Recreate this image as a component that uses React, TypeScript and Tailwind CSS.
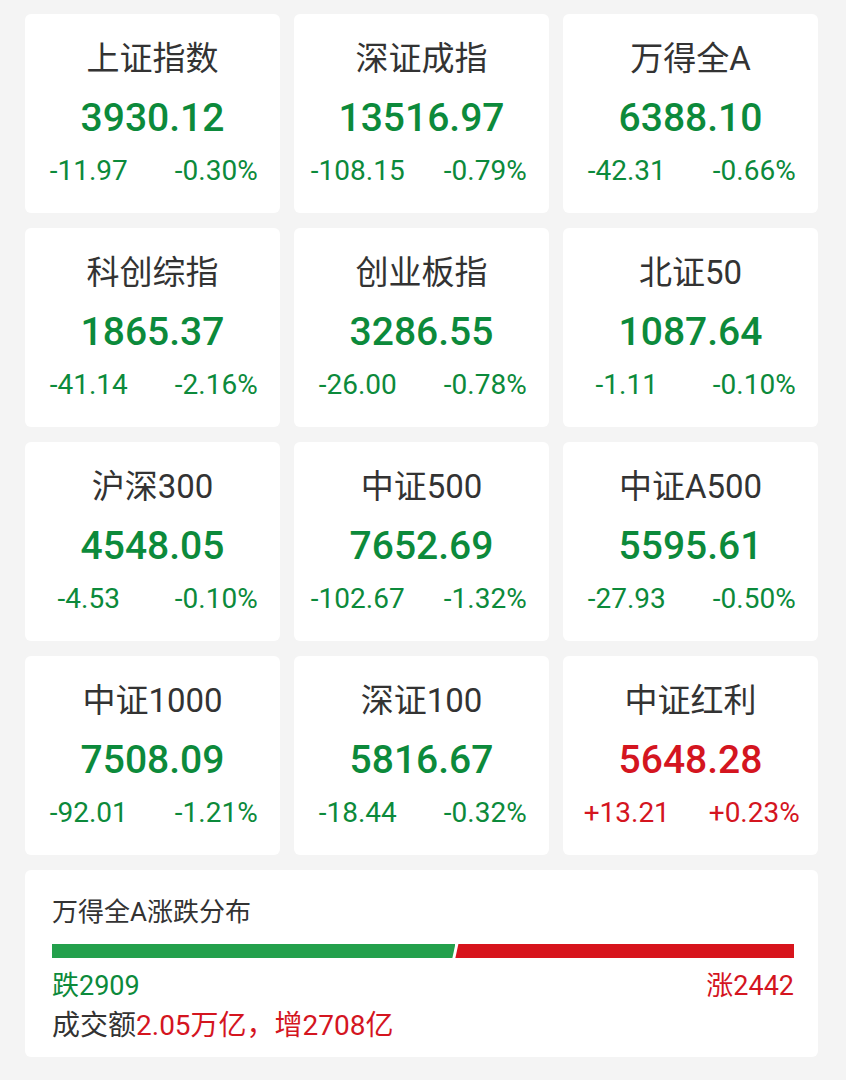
const FONT = { fontFamily: 'Roboto, "Noto Sans CJK SC", sans-serif' };

interface IndexItem {
  name: string;
  value: string;
  change: string;
  pct: string;
  up?: boolean;
}

const items: IndexItem[] = [
  { name: "上证指数", value: "3930.12", change: "-11.97", pct: "-0.30%" },
  { name: "深证成指", value: "13516.97", change: "-108.15", pct: "-0.79%" },
  { name: "万得全A", value: "6388.10", change: "-42.31", pct: "-0.66%" },
  { name: "科创综指", value: "1865.37", change: "-41.14", pct: "-2.16%" },
  { name: "创业板指", value: "3286.55", change: "-26.00", pct: "-0.78%" },
  { name: "北证50", value: "1087.64", change: "-1.11", pct: "-0.10%" },
  { name: "沪深300", value: "4548.05", change: "-4.53", pct: "-0.10%" },
  { name: "中证500", value: "7652.69", change: "-102.67", pct: "-1.32%" },
  { name: "中证A500", value: "5595.61", change: "-27.93", pct: "-0.50%" },
  { name: "中证1000", value: "7508.09", change: "-92.01", pct: "-1.21%" },
  { name: "深证100", value: "5816.67", change: "-18.44", pct: "-0.32%" },
  { name: "中证红利", value: "5648.28", change: "+13.21", pct: "+0.23%", up: true },
];

const IndexCard = ({ item }: { item: IndexItem }) => {
  const color = item.up ? "text-[#d4151f]" : "text-[#0c8a3b]";
  return (
    <div className="bg-white rounded-md h-[199px] flex flex-col items-center pt-[25px]">
      <p className="text-[33px] leading-[40px] text-[#333333]">{item.name}</p>
      <p className={`text-[39px] leading-[46px] font-medium mt-[16px] ${color}`}>{item.value}</p>
      <div className={`grid grid-cols-2 w-full mt-[13px] text-[28px] leading-[34px] ${color}`}>
        <span className="text-center">{item.change}</span>
        <span className="text-center">{item.pct}</span>
      </div>
    </div>
  );
};

const App = () => {
  return (
    <div className="min-h-[1080px] bg-[#f4f4f4] pl-[25px] pr-[28px] pt-[14px]" style={FONT}>
      <div className="grid grid-cols-3 gap-x-[14px] gap-y-[15px]">
        {items.map((item) => (
          <IndexCard key={item.name} item={item} />
        ))}
      </div>

      <div className="bg-white rounded-md mt-[15px] h-[187px] pl-[27px] pr-[24px] pt-[25px]">
        <p className="text-[26px] leading-[34px] text-[#333333]">万得全A涨跌分布</p>
        <div className="flex h-[14px] mt-[15px]">
          <div className="flex-[2909] bg-[#23a04c] [clip-path:polygon(0_0,100%_0,calc(100%-3px)_100%,0_100%)]" />
          <div className="flex-[2442] bg-[#d7141c] [clip-path:polygon(3px_0,100%_0,100%_100%,0_100%)]" />
        </div>
        <div className="flex justify-between mt-[11px] text-[27px] leading-[34px]">
          <span className="text-[#0c8a3b]">跌2909</span>
          <span className="text-[#d4151f]">涨2442</span>
        </div>
        <p className="text-[28px] leading-[36px] mt-[5px] text-[#333333]">
          成交额<span className="text-[#d4151f]">2.05万亿，增2708亿</span>
        </p>
      </div>
    </div>
  );
};

export default App;
